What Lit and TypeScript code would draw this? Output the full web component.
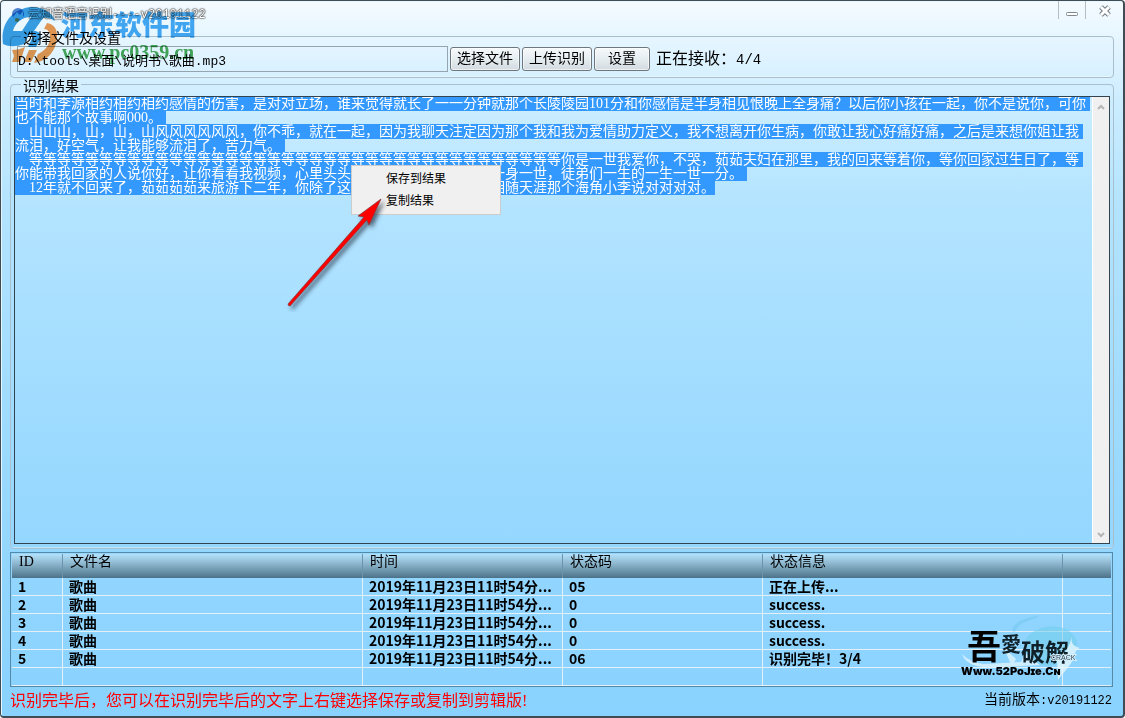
import { LitElement, html, css, svg } from "lit";
import { customElement, state, query } from "lit/decorators.js";

interface Job {
  id: number;
  name: string;
  time: string;
  code: string;
  info: string;
}

const TIME = "2019年11月23日11时54分...";

const JOBS: Job[] = [
  { id: 1, name: "歌曲", time: TIME, code: "05", info: "正在上传..." },
  { id: 2, name: "歌曲", time: TIME, code: "0", info: "success." },
  { id: 3, name: "歌曲", time: TIME, code: "0", info: "success." },
  { id: 4, name: "歌曲", time: TIME, code: "0", info: "success." },
  { id: 5, name: "歌曲", time: TIME, code: "06", info: "识别完毕！3/4" },
];

const RESULT = [
  "当时和李源相约相约相约感情的伤害，是对对立场，谁来觉得就长了一一分钟就那个长陵陵园101分和你感情是半身相见恨晚上全身痛？以后你小孩在一起，你不是说你，可你也不能那个故事啊000。",
  "　山山山，山，山，山风风风风风风，你不乖，就在一起，因为我聊天注定因为那个我和我为爱情助力定义，我不想离开你生病，你敢让我心好痛好痛，之后是来想你姐让我流泪，好空气，让我能够流泪了，苦力气。",
  "　" + "等".repeat(38) +
    "你是一世我爱你，不哭，茹茹夫妇在那里，我的回来等着你，等你回家过生日了，等你能带我回家的人说你好，让你看看我视频，心里头头的声音听着我们在一起一身一世，徒弟们一生的一生一世一分。",
  "　12年就不回来了，茹茹茹茹来旅游下二年，你除了这个世界上我们都还能够相随天涯那个海角小李说对对对对。",
].join("\n");

@customElement("result-menu")
export class ResultMenu extends LitElement {
  static styles = css`
    :host {
      display: block;
      background: #f0f0f0;
      border: 1px solid #ccc;
      padding: 1px 2px 3px;
    }
    .item {
      display: block;
      width: 100%;
      height: 22px;
      border: 0;
      padding: 0 0 0 32px;
      background: none;
      text-align: left;
      color: #000;
      font: 12px/22px "Noto Sans CJK SC", sans-serif;
    }
  `;
  render() {
    return html`
      <button class="item" role="menuitem">保存到结果</button>
      <button class="item" role="menuitem">复制结果</button>
    `;
  }
}

@customElement("app-root")
export class AppRoot extends LitElement {
  @state() private jobs = JOBS;
  @query(".result") private result!: HTMLTextAreaElement;

  static styles = css`
    :host {
      display: block;
      color: #000;
      font: 14px/14px "Liberation Serif", "Noto Sans CJK SC", serif;
      text-spacing-trim: space-all;
    }
    * {
      box-sizing: border-box;
    }
    .window {
      position: relative;
      display: flex;
      flex-direction: column;
      min-height: 100vh;
      padding: 0 9px 5px;
      border: 1px solid #3f4c55;
      border-width: 1px 2px 2px 1px;
      border-radius: 4px;
      box-shadow: inset 1px 1px 0 #e6f7ff;
      background: linear-gradient(#f4fbff 0, #dff3ff 55px, #ccedff 100px, #b4e4ff 200px, #9edbff 420px, #92d6ff 570px, #89d2ff 100%);
    }
    .titlebar {
      display: flex;
      align-items: flex-start;
      justify-content: space-between;
      height: 25px;
    }
    .title {
      display: flex;
      align-items: center;
      gap: 2px;
      margin: 0;
      padding: 6px 0 0 0;
      color: #fff;
      font: 12px/14px "Liberation Mono", "Noto Sans CJK SC", monospace;
      text-shadow: 0 0 1px #333, 0 0 1px #333, 0 0 2px #555, 0 0 2px #777;
    }
    .controls {
      display: flex;
      margin-right: -9px;
    }
    .control {
      width: 27px;
      height: 18px;
      padding: 4px 0 0;
      border: 0;
      border-left: 1px solid #b3bec5;
      background: none;
      line-height: 0;
    }
    .control.close {
      width: 38px;
    }
    fieldset {
      margin: 0;
      min-width: 0;
      border: 1px solid #a9bfcc;
      border-radius: 4px;
      box-shadow: inset 0 -1px 0 #ffffff66;
    }
    legend {
      height: 20px;
      margin: 0;
      padding: 6px 2px 0;
    }
    .files {
      padding: 0 6px 5px;
    }
    .files legend {
      margin-left: 4px;
    }
    .output legend {
      height: 12px;
      margin-left: 7px;
      padding-top: 2px;
    }
    .row {
      display: flex;
      align-items: center;
      gap: 2px;
    }
    .path {
      flex: 0 1 431px;
      min-width: 0;
      height: 26px;
      padding: 0;
      border: 1px solid #94a5af;
      background: transparent;
      color: #000;
      font: 13px/20px "Liberation Mono", "Noto Sans CJK SC", monospace;
    }
    .button {
      height: 24px;
      padding: 0 6px;
      border: 1px solid #70777c;
      border-radius: 3px;
      background: linear-gradient(#f5f9fb, #e6edf1 50%, #d3dbe0);
      box-shadow: inset 0 0 0 1px #ffffff99;
      color: #000;
      font: inherit;
      white-space: nowrap;
    }
    .button.wide {
      padding: 0 13px;
    }
    .status {
      margin: 0 4px;
      font-size: 16px;
      line-height: 20px;
      white-space: nowrap;
    }
    .count {
      font: 14px/20px "Liberation Mono", monospace;
    }
    .output {
      padding: 6px 3px 4px;
    }
    .pane {
      position: relative;
      display: flex;
      height: calc(100vh - 270px);
      min-height: 240px;
      border: 1px solid #34444f;
    }
    .result {
      flex: 1;
      min-width: 0;
      margin: 0;
      padding: 0;
      border: 0;
      outline: 0;
      overflow: hidden;
      resize: none;
      background: transparent;
      color: #000;
      font: inherit;
      text-spacing-trim: space-all;
    }
    .result::selection {
      background: #3399ff;
      color: #fff;
    }
    .scroll {
      display: flex;
      flex-direction: column;
      justify-content: space-between;
      width: 17px;
      border-left: 1px solid #fff;
      background: #f0f0f0;
    }
    .arrow {
      height: 17px;
      padding: 0;
      border: 0;
      background: none;
      line-height: 0;
    }
    .menu {
      position: absolute;
      top: 68px;
      left: 336px;
      width: 150px;
    }
    .pointer {
      position: absolute;
      top: 95px;
      left: 265px;
      pointer-events: none;
    }
    .list {
      margin: 3px 1px 0 0;
      border: 1px solid #5589a8;
      padding: 1px 1px 0 1px;
    }
    table {
      width: 100%;
      table-layout: fixed;
      border-collapse: separate;
      border-spacing: 0;
    }
    .c-id {
      width: 51px;
    }
    .c-name {
      width: 300px;
    }
    .c-mid {
      width: 200px;
    }
    .c-info {
      width: 300px;
    }
    thead {
      background: linear-gradient(#b3e1fb, #8db7ce 40%, #4c7289);
    }
    th {
      height: 24px;
      padding: 0 7px 8px;
      border-right: 1px solid #6c94ab;
      font-weight: 400;
      text-align: left;
    }
    td {
      height: 18px;
      padding: 0 6px;
      border-right: 1px solid #e4eff6;
      border-bottom: 1px solid #e4eff6;
      font: bold 14px/17px "Noto Sans CJK SC", sans-serif;
      white-space: nowrap;
    }
    th:last-child,
    td:last-child {
      border-right: 0;
    }
    .footer {
      display: flex;
      align-items: center;
      justify-content: space-between;
      padding: 3px 2px 0 0;
      line-height: 20px;
    }
    .hint {
      margin: 0;
      color: #f00;
      font-size: 16px;
    }
    .version {
      margin: 0;
    }
    .number {
      font: 12px/20px "Liberation Mono", monospace;
    }
    .watermark {
      position: absolute;
      top: 2px;
      left: 0;
      mix-blend-mode: multiply;
      pointer-events: none;
    }
    .stamp {
      position: absolute;
      right: 32px;
      bottom: 29px;
      pointer-events: none;
    }
    .mark-cn {
      font: 900 27px "Noto Sans CJK SC", sans-serif;
    }
    .mark-url {
      font: bold 20px "Liberation Serif", serif;
    }
    .seal {
      font-family: "Noto Sans CJK SC", sans-serif;
      font-weight: bold;
    }
    .seal-url {
      font: 900 11px Inter, sans-serif;
      font-variant-caps: small-caps;
    }
  `;

  firstUpdated() {
    this.result.focus({ preventScroll: true });
    this.result.select();
  }

  private watermark() {
    return html`<svg class="watermark" width="204" height="66" viewBox="0 0 204 66" aria-hidden="true">
      ${svg`
        <path d="M2 41C-1 20 12 5 31 4c11 0 20 5 23 14-4-3-8-4-12-3l-9 13c6 0 8 4 6 9l-4 7h-8l5-11c0-2-3-2-5 1l-4 7c-8 3-15 3-21 0zM12 28h9l9-14c-9 0-16 6-18 14z" fill="#3aa0df" fill-rule="evenodd"/>
        <path d="M46 20c6 1 10 5 10 12 0 15-9 26-23 28l4-9c8-4 12-10 12-17 0-5-2-8-6-8zM11 47c5 0 9-1 13-3l-5 15h-8l2-6zM28 47h8l-6 12h-7z" fill="#f39a52"/>
        <text class="mark-cn" x="60" y="32" fill="#46aaf0">河东软件园</text>
        <text class="mark-url" x="61" y="56" fill="#48a857">www.pc0359.cn</text>
      `}
    </svg>`;
  }

  private stamp() {
    return html`<svg class="stamp" width="130" height="72" viewBox="0 0 130 72" aria-hidden="true">
      ${svg`
        <path d="M51 16c2-11 13-12 27-16-5 7-19 4-24 17z" fill="#68c3e8" opacity=".4"/>
        <path d="M66 22c14-16 44-14 50 4 1 14-12 24-30 25-18-2-26-12-20-29z" fill="#73cdea" opacity=".55"/>
        <path d="M112 19c-3 8-1 12 7 14-7 2-5 12-11 18-4 6-8 9-11 14l-1-19c10-8 12-15 16-27z" fill="#e4f6ff" opacity=".8"/>
        <path d="M1 39c6 6 13 9 22 10l37-2 4-9 15 12-36 2C20 54 5 51 1 39zM43 33l12 11-4 8z" fill="#e4f6ff" opacity=".75"/>
        <text class="seal" x="6" y="44" font-size="34" fill="#000">吾</text>
        <text class="seal" x="40" y="37" font-size="20" fill="#102028">愛</text>
        <text class="seal" x="60" y="46" font-size="24" fill="#102028">破解</text>
        <text x="90" y="45" font-size="7" font-family="Liberation Sans" fill="#345" stroke="#d4effc" stroke-width="2" paint-order="stroke">CRACK</text>
        <text class="seal-url" x="0" y="60" fill="#000">Www.52PoJie.Cn</text>
      `}
    </svg>`;
  }

  private arrow(d: string) {
    return html`<svg width="16" height="16" viewBox="0 0 16 16">
      <path d=${d} fill="none" stroke="#b5b5b5" stroke-width="2" />
    </svg>`;
  }

  render() {
    return html`
      <main class="window">
        <header class="titlebar">
          <h1 class="title">
            <svg width="16" height="16" viewBox="0 0 16 16" aria-hidden="true">
              <circle cx="8" cy="7" r="6" fill="#4d83cf" />
              <path d="M3 10l4-5 3 3 3-4v8H4z" fill="#dcefff" />
              <circle cx="7" cy="13" r="2" fill="#f0a35c" />
            </svg>
            云知音语音识别----v20191122
          </h1>
          <div class="controls">
            <button class="control" aria-label="最小化">
              <svg width="14" height="14" viewBox="0 0 14 14">
                <rect x="1.500" y="7.500" width="11" height="3" rx="1" fill="#fff" stroke="#7c878e" />
              </svg>
            </button>
            <button class="control close" aria-label="关闭">
              <svg width="14" height="14" viewBox="0 0 14 14">
                <path d="M3 2l8 8M11 2l-8 8" stroke="#727b82" stroke-width="5" />
                <path d="M3 2l8 8M11 2l-8 8" stroke="#fff" stroke-width="3" />
              </svg>
            </button>
          </div>
        </header>

        <fieldset class="files">
          <legend>选择文件及设置</legend>
          <div class="row">
            <input class="path" aria-label="文件路径" value="D:\\tools\\桌面\\说明书\\歌曲.mp3" />
            <button class="button">选择文件</button>
            <button class="button">上传识别</button>
            <button class="button wide">设置</button>
            <p class="status">正在接收：<span class="count">4/4</span></p>
          </div>
        </fieldset>

        <fieldset class="output">
          <legend>识别结果</legend>
          <div class="pane">
            <textarea class="result" aria-label="识别结果" spellcheck="false" .value=${RESULT}></textarea>
            <div class="scroll">
              <button class="arrow" aria-label="向上滚动">${this.arrow("M5 11l3-3 3 3")}</button>
              <button class="arrow" aria-label="向下滚动">${this.arrow("M5 6l3 3 3-3")}</button>
            </div>
            <result-menu class="menu" role="menu"></result-menu>
            <svg class="pointer" width="120" height="120" viewBox="0 0 120 120" aria-hidden="true">
              <defs>
                <filter id="shade" x="-20%" y="-20%" width="150%" height="150%">
                  <feDropShadow dx="3" dy="3" stdDeviation="2" flood-color="#234" flood-opacity=".7" />
                </filter>
              </defs>
              <path
                d="M101 7L78 24l6 1L8 112q0 2 2 2L87 28l2 5z"
                fill="#f00"
                stroke="#7a3b3b"
                stroke-width=".7"
                filter="url(#shade)"
              />
            </svg>
          </div>
        </fieldset>

        <section class="list">
          <table>
            <colgroup>
              <col class="c-id" />
              <col class="c-name" />
              <col class="c-mid" />
              <col class="c-mid" />
              <col class="c-info" />
              <col />
            </colgroup>
            <thead>
              <tr>
                <th>ID</th>
                <th>文件名</th>
                <th>时间</th>
                <th>状态码</th>
                <th>状态信息</th>
                <th></th>
              </tr>
            </thead>
            <tbody>
              ${this.jobs.map(
                (job) => html`<tr>
                  <td>${job.id}</td>
                  <td>${job.name}</td>
                  <td>${job.time}</td>
                  <td>${job.code}</td>
                  <td>${job.info}</td>
                  <td></td>
                </tr>`
              )}
              <tr>
                <td></td>
                <td></td>
                <td></td>
                <td></td>
                <td></td>
                <td></td>
              </tr>
            </tbody>
          </table>
        </section>

        <footer class="footer">
          <p class="hint">识别完毕后，您可以在识别完毕后的文字上右键选择保存或复制到剪辑版!</p>
          <p class="version">当前版本<span class="number">:v20191122</span></p>
        </footer>
        ${this.watermark()} ${this.stamp()}
      </main>
    `;
  }
}
